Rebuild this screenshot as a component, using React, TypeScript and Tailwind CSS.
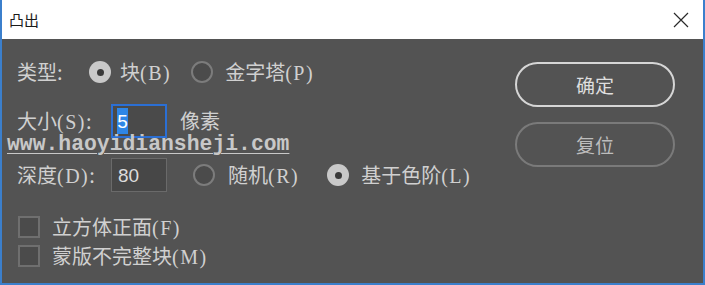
import React from "react";

const cjk = { fontFamily: '"Noto Sans CJK SC", "Noto Sans", sans-serif' };

// latin part of a label, e.g. "(B)"
const Key = ({ children }: { children: React.ReactNode }) => (
  <span className="font-['Liberation_Serif'] tracking-[1.5px]">{children}</span>
);

const Radio = ({ checked }: { checked?: boolean }) =>
  checked ? (
    <span className="flex h-[22px] w-[22px] shrink-0 items-center justify-center rounded-full bg-[#c9c9c9]">
      <span className="h-[7px] w-[7px] rounded-full bg-[#3a3a3a]" />
    </span>
  ) : (
    <span className="h-[22px] w-[22px] shrink-0 rounded-full border-2 border-[#7c7c7c] bg-[#4b4b4b]" />
  );

const Checkbox = () => (
  <span className="h-[22px] w-[22px] shrink-0 border-2 border-[#6f6f6f] bg-[#4b4b4b]" />
);

export default function App() {
  return (
    <div
      className="relative flex h-[285px] w-[705px] flex-col overflow-hidden border-x-2 border-b-2 border-[#3b7fcc] bg-[#535353] text-[20px] leading-none text-[#d0d0d0]"
      style={cjk}
    >
      {/* Title bar */}
      <div className="flex h-[39px] shrink-0 items-center justify-between bg-white pl-[7px] pr-[14px] text-[15px] text-[#1a1a1a]">
        <span>凸出</span>
        <svg width="16" height="16" viewBox="0 0 16 16" fill="none">
          <path d="M1 1 L15 15 M15 1 L1 15" stroke="#2a2a2a" strokeWidth="1.2" />
        </svg>
      </div>

      <div className="flex flex-1">
        {/* Left: options */}
        <div className="flex flex-1 flex-col pl-[15px] pt-[16px]">
          <div className="flex h-[34px] items-center">
            <span className="w-[72px]">类型:</span>
            <Radio checked />
            <span className="ml-[9px]">
              块<Key>(B)</Key>
            </span>
            <span className="ml-[20px] flex items-center">
              <Radio />
              <span className="ml-[12px]">
                金字塔<Key>(P)</Key>
              </span>
            </span>
          </div>

          <div className="mt-[15px] flex h-[34px] items-center">
            <span className="w-[94px]">
              大小<Key>(S)</Key>:
            </span>
            <div className="flex h-[34px] w-[56px] items-center border-2 border-[#2b6fd4] bg-[#4a4a4a] pl-[4px]">
              <span className="flex h-[26px] w-[11px] items-center justify-center bg-[#2f86e6] font-['Liberation_Sans'] text-[19px] text-white">
                5
              </span>
            </div>
            <span className="ml-[13px]">像素</span>
          </div>

          <div className="mt-[20px] flex h-[34px] items-center">
            <span className="w-[94px]">
              深度<Key>(D)</Key>:
            </span>
            <div className="flex h-[34px] w-[56px] items-center border border-[#6a6a6a] bg-[#474747] pl-[6px] font-['Liberation_Sans'] text-[19px] text-[#dcdcdc]">
              80
            </div>
            <span className="ml-[26px] flex items-center">
              <Radio />
              <span className="ml-[13px]">
                随机<Key>(R)</Key>
              </span>
            </span>
            <span className="ml-[28px] flex items-center">
              <Radio checked />
              <span className="ml-[12px]">
                基于色阶<Key>(L)</Key>
              </span>
            </span>
          </div>

          <div className="mt-[24px] flex h-[22px] items-center pl-[1px]">
            <Checkbox />
            <span className="ml-[12px]">
              立方体正面<Key>(F)</Key>
            </span>
          </div>
          <div className="mt-[7px] flex h-[22px] items-center pl-[1px]">
            <Checkbox />
            <span className="ml-[12px]">
              蒙版不完整块<Key>(M)</Key>
            </span>
          </div>
        </div>

        {/* Right: buttons */}
        <div className="flex flex-col pr-[28px] pt-[23px]">
          <button className="flex h-[45px] w-[160px] items-center justify-center rounded-full border-2 border-[#d6d6d6] text-[19px] text-[#dedede]">
            确定
          </button>
          <button className="mt-[15px] flex h-[45px] w-[160px] items-center justify-center rounded-full border-2 border-[#7a7a7a] text-[19px] text-[#bdbdbd]">
            复位
          </button>
        </div>
      </div>

      {/* watermark */}
      <div className="absolute left-[5px] top-[134px] font-['Liberation_Mono'] text-[21.4px] font-bold leading-none text-[#c8c8c8] underline decoration-1 underline-offset-[3px]">
        www.haoyidiansheji.com
      </div>
    </div>
  );
}
